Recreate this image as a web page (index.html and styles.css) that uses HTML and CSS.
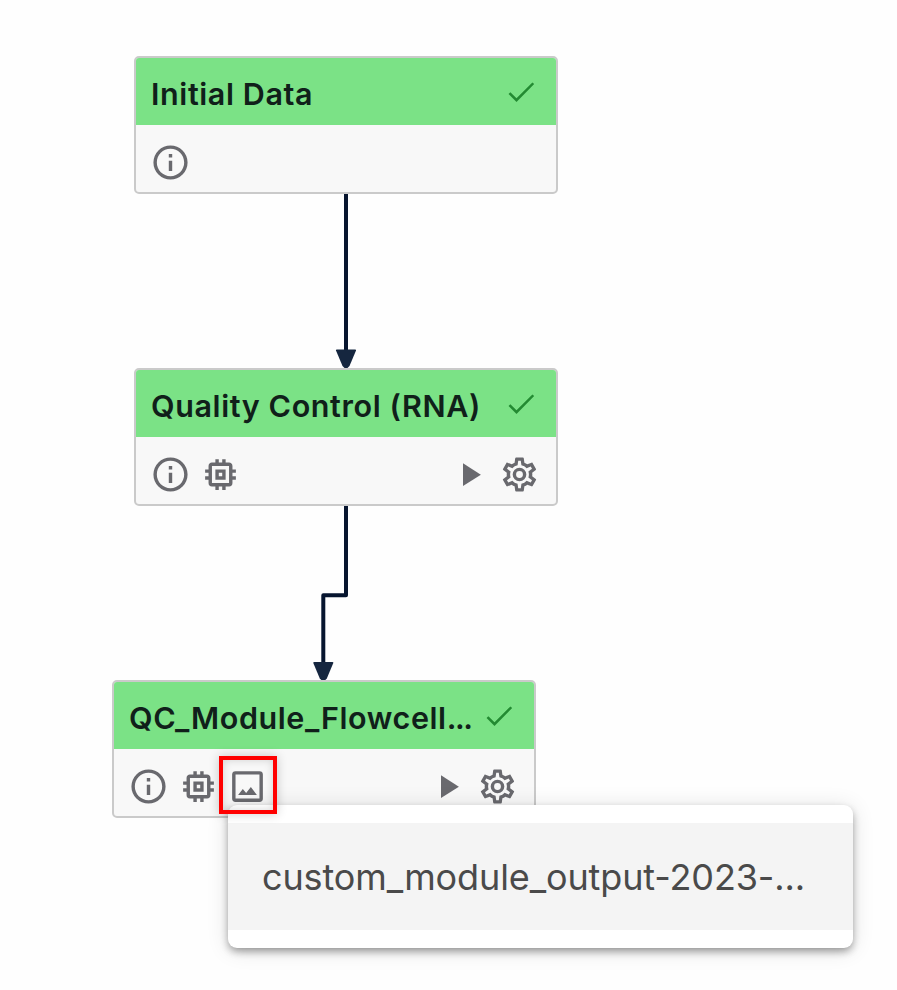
FILE: index.html
```html
<!DOCTYPE html>
<html lang="en">
<head>
<meta charset="utf-8">
<title>Pipeline</title>
<link rel="stylesheet" href="styles.css">
</head>
<body>
<svg class="defs" aria-hidden="true">
  <symbol id="check" viewBox="0 0 24 24"><path d="M20.800,6.700L9,18.600L3.700,13.300L4.91,12.09L9,16.170L19.59,5.59Z"/></symbol>
  <symbol id="info" viewBox="0 0 24 24"><path d="M11,9H13V7H11M12,20C7.59,20 4,16.41 4,12C4,7.59 7.59,4 12,4C16.41,4 20,7.59 20,12C20,16.41 16.41,20 12,20M12,2A10,10 0 0,0 2,12A10,10 0 0,0 12,22A10,10 0 0,0 22,12A10,10 0 0,0 12,2M11,17H13V11H11V17Z"/></symbol>
  <symbol id="chip" viewBox="0 0 24 24"><path d="M17,17H7V7H17M21,11V9H19V7C19,5.89 18.1,5 17,5H15V3H13V5H11V3H9V5H7C5.89,5 5,5.89 5,7V9H3V11H5V13H3V15H5V17A2,2 0 0,0 7,19H9V21H11V19H13V21H15V19H17A2,2 0 0,0 19,17V15H21V13H19V11M13,13H11V11H13M15,9H9V15H15V9Z"/></symbol>
  <symbol id="image" viewBox="0 0 24 24"><path d="M19,19H5V5H19M19,3H5A2,2 0 0,0 3,5V19A2,2 0 0,0 5,21H19A2,2 0 0,0 21,19V5A2,2 0 0,0 19,3M13.96,12.29L11.21,15.83L9.25,13.47L6.5,17H17.5L13.96,12.29Z"/></symbol>
  <symbol id="play" viewBox="0 0 24 24"><path d="M8,5.14V19.14L19,12.14L8,5.14Z"/></symbol>
  <symbol id="cog" viewBox="0 0 24 24"><path d="M12,8A4,4 0 0,1 16,12A4,4 0 0,1 12,16A4,4 0 0,1 8,12A4,4 0 0,1 12,8M12,10A2,2 0 0,0 10,12A2,2 0 0,0 12,14A2,2 0 0,0 14,12A2,2 0 0,0 12,10M10,22C9.75,22 9.54,21.82 9.5,21.58L9.13,18.93C8.5,18.68 7.96,18.34 7.44,17.94L4.95,18.95C4.73,19.03 4.46,18.95 4.34,18.73L2.34,15.27C2.21,15.05 2.27,14.78 2.46,14.63L4.57,12.97L4.5,12L4.57,11L2.46,9.37C2.27,9.22 2.21,8.95 2.34,8.73L4.34,5.27C4.46,5.05 4.73,4.96 4.95,5.05L7.44,6.05C7.96,5.66 8.5,5.32 9.13,5.07L9.5,2.42C9.54,2.18 9.75,2 10,2H14C14.25,2 14.46,2.18 14.5,2.42L14.87,5.07C15.5,5.32 16.04,5.66 16.56,6.05L19.05,5.05C19.27,4.96 19.54,5.05 19.66,5.27L21.66,8.73C21.79,8.95 21.73,9.22 21.54,9.37L19.43,11L19.5,12L19.43,13L21.54,14.63C21.73,14.78 21.79,15.05 21.66,15.27L19.66,18.73C19.54,18.95 19.27,19.04 19.05,18.95L16.56,17.95C16.04,18.34 15.5,18.68 14.87,18.93L14.5,21.58C14.46,21.82 14.25,22 14,22H10M11.25,4L10.88,6.61C9.68,6.86 8.62,7.5 7.85,8.39L5.44,7.35L4.69,8.65L6.8,10.2C6.4,11.37 6.4,12.64 6.8,13.8L4.68,15.36L5.43,16.66L7.86,15.62C8.63,16.5 9.68,17.14 10.87,17.38L11.24,20H12.76L13.13,17.39C14.32,17.14 15.37,16.5 16.14,15.62L18.57,16.66L19.32,15.36L17.2,13.81C17.6,12.64 17.6,11.37 17.2,10.2L19.31,8.65L18.56,7.35L16.15,8.39C15.38,7.5 14.32,6.86 13.12,6.62L12.75,4H11.25Z"/></symbol>
</svg>

<main class="canvas">
  <svg class="edges" viewBox="0 0 897 990" aria-hidden="true">
    <path class="line" d="M346 193V352M346 505V595.3H323.3V664"/>
    <path class="head" d="M336 350.5Q335.6 349.5 337 349.5H355Q356.4 349.5 356 350.5L349.500 366L347.500 368H344.500L342.500 366Z"/>
    <path class="head" d="M313.300 663Q312.900 662 314.300 662H332.300Q333.700 662 333.300 663L326.800 678.500L324.800 680.500H321.800L319.800 678.500Z"/>
  </svg>

  <section class="node node-initial">
    <header class="node-head"><h2 class="title">Initial Data</h2><svg class="check"><use href="#check"/></svg></header>
    <div class="node-body"><svg class="icon"><use href="#info"/></svg></div>
  </section>

  <section class="node node-qc">
    <header class="node-head"><h2 class="title">Quality Control (RNA)</h2><svg class="check"><use href="#check"/></svg></header>
    <div class="node-body">
      <svg class="icon"><use href="#info"/></svg>
      <svg class="icon"><use href="#chip"/></svg>
      <svg class="icon play"><use href="#play"/></svg>
      <svg class="icon"><use href="#cog"/></svg>
    </div>
  </section>

  <section class="node node-module">
    <header class="node-head"><h2 class="title">QC_Module_Flowcell<span class="dots">...</span></h2><svg class="check"><use href="#check"/></svg></header>
    <div class="node-body">
      <svg class="icon"><use href="#info"/></svg>
      <svg class="icon"><use href="#chip"/></svg>
      <svg class="icon"><use href="#image"/></svg>
      <svg class="icon play"><use href="#play"/></svg>
      <svg class="icon"><use href="#cog"/></svg>
    </div>
  </section>

  <div class="menu"><div class="menu-item"><span class="menu-text">custom_module_output-2023-...</span></div></div>
  <div class="highlight"></div>
</main>
</body>
</html>
```
FILE: styles.css
```css
* { box-sizing: border-box; }
body {
  margin: 0;
  background: #fefefe;
  font-family: Inter, "Liberation Sans", sans-serif;
}
.defs { position: absolute; width: 0; height: 0; }
.canvas {
  position: relative;
  width: 897px;
  height: 990px;
  overflow: hidden;
}
.edges { position: absolute; inset: 0; width: 897px; height: 990px; }
.line { fill: none; stroke: #07152f; stroke-width: 4; stroke-linejoin: round; }
.head { fill: #15263f; }

.node {
  position: absolute;
  width: 424px;
  height: 138px;
  border: 2px solid #cacaca;
  border-radius: 5px;
  background: #f8f8f8;
  overflow: hidden;
}
.node-initial { left: 134px; top: 56px; }
.node-qc { left: 134px; top: 368px; }
.node-module { left: 112px; top: 680px; }
.node-head {
  display: flex;
  align-items: center;
  justify-content: space-between;
  height: 67px;
  padding: 0 17px 0 15px;
  background: #7be286;
}
.title {
  margin: 0;
  padding-top: 4px;
  font-size: 30.5px;
  line-height: 36px;
  font-weight: 600;
  letter-spacing: .6px;
  color: #10201a;
  white-space: nowrap;
}
.dots { letter-spacing: -1.4px; }
.check { width: 36px; height: 36px; fill: #238a32; flex: none; }
.node-body {
  display: flex;
  align-items: center;
  gap: 8.5px;
  height: 67px;
  padding: 8px 16.5px 0 14px;
}
.icon { width: 41px; height: 41px; fill: #69696e; flex: none; }
.play { width: 39px; height: 39px; margin-left: auto; margin-right: 1.5px; }

.menu {
  position: absolute;
  left: 227.5px;
  top: 804.5px;
  width: 625px;
  height: 143px;
  padding: 18px 0;
  border-radius: 9px;
  background: #fff;
  box-shadow: 0 4px 9px -2px rgba(0,0,0,.32), 0 4px 8px rgba(0,0,0,.13), 0 2px 22px rgba(0,0,0,.12);
}
.menu-item {
  display: flex;
  align-items: center;
  height: 107px;
  padding: 2px 34px 0 34.5px;
  background: #f4f4f4;
}
.menu-text {
  font-size: 36px;
  line-height: 44px;
  letter-spacing: -.12px;
  color: #4a4a4a;
  white-space: nowrap;
}
.highlight {
  position: absolute;
  left: 219px;
  top: 756px;
  width: 58px;
  height: 58px;
  border: 4.5px solid #f00;
  box-shadow: 0 0 10px rgba(0,0,0,.2), inset 0 0 9px rgba(0,0,0,.16);
}
```
